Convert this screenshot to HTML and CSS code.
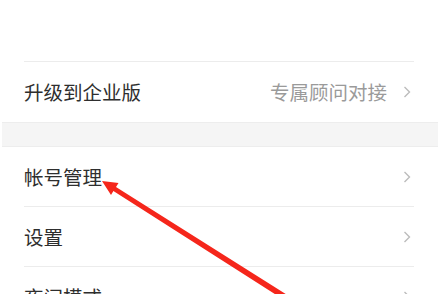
FILE: index.html
```html
<!DOCTYPE html>
<html lang="zh-CN">
<head>
<meta charset="utf-8">
<link rel="stylesheet" href="styles.css">
</head>
<body>
<div class="page">
  <div class="top-space"></div>
  <div class="group">
    <div class="row row-first">
      <span class="label">升级到企业版</span>
      <span class="right"><span class="hint">专属顾问对接</span><svg class="chev" viewBox="0 0 8 12" width="8" height="12"><polyline points="1.5,1 6.5,6 1.5,11" fill="none" stroke="#bcbcbc" stroke-width="1.4"/></svg></span>
    </div>
  </div>
  <div class="band"></div>
  <div class="group">
    <div class="row">
      <span class="label">帐号管理</span>
      <span class="right"><svg class="chev" viewBox="0 0 8 12" width="8" height="12"><polyline points="1.5,1 6.5,6 1.5,11" fill="none" stroke="#bcbcbc" stroke-width="1.4"/></svg></span>
    </div>
    <div class="row">
      <span class="label">设置</span>
      <span class="right"><svg class="chev" viewBox="0 0 8 12" width="8" height="12"><polyline points="1.5,1 6.5,6 1.5,11" fill="none" stroke="#bcbcbc" stroke-width="1.4"/></svg></span>
    </div>
    <div class="row">
      <span class="label">夜间模式</span>
      <span class="right"><svg class="chev" viewBox="0 0 8 12" width="8" height="12"><polyline points="1.5,1 6.5,6 1.5,11" fill="none" stroke="#bcbcbc" stroke-width="1.4"/></svg></span>
    </div>
  </div>
  <svg class="arrow" viewBox="0 0 443 294" width="443" height="294">
    <polygon fill="#f5261b" points="102,181 118.5,183.1 116,186.9 297.6,301.5 294.4,306.5 113.4,191.1 111,194.9"/>
  </svg>
</div>
</body>
</html>
```

FILE: styles.css
```css
html, body {
  margin: 0;
  padding: 0;
  background: #ffffff;
}
body {
  font-family: "Noto Sans CJK SC", "Noto Sans", sans-serif;
  color: #333333;
  overflow: hidden;
  width: 443px;
  height: 294px;
}
.page {
  position: relative;
  width: 443px;
  height: 294px;
  overflow: hidden;
}
.top-space {
  height: 61px;
}
.group {
  padding: 0 29px 0 24px;
}
.row {
  height: 59px;
  border-bottom: 1px solid #ececec;
  display: flex;
  align-items: center;
  justify-content: space-between;
}
.row-first {
  border-top: 1px solid #ececec;
  border-bottom: none;
  height: 60px;
}
.label {
  font-size: 19.5px;
  line-height: 1;
  color: #2e2e2e;
}
.right {
  display: flex;
  align-items: center;
}
.hint {
  font-size: 19.5px;
  line-height: 1;
  color: #9a9a9a;
  margin-right: 16px;
}
.chev {
  display: block;
  margin-right: 3px;
}
.band {
  height: 23px;
  margin: 0 5px 0 2px;
  background: #f5f5f5;
  border-top: 1px solid #ededed;
  border-bottom: 1px solid #ededed;
}
.arrow {
  position: absolute;
  left: 0;
  top: 0;
  pointer-events: none;
}
```
